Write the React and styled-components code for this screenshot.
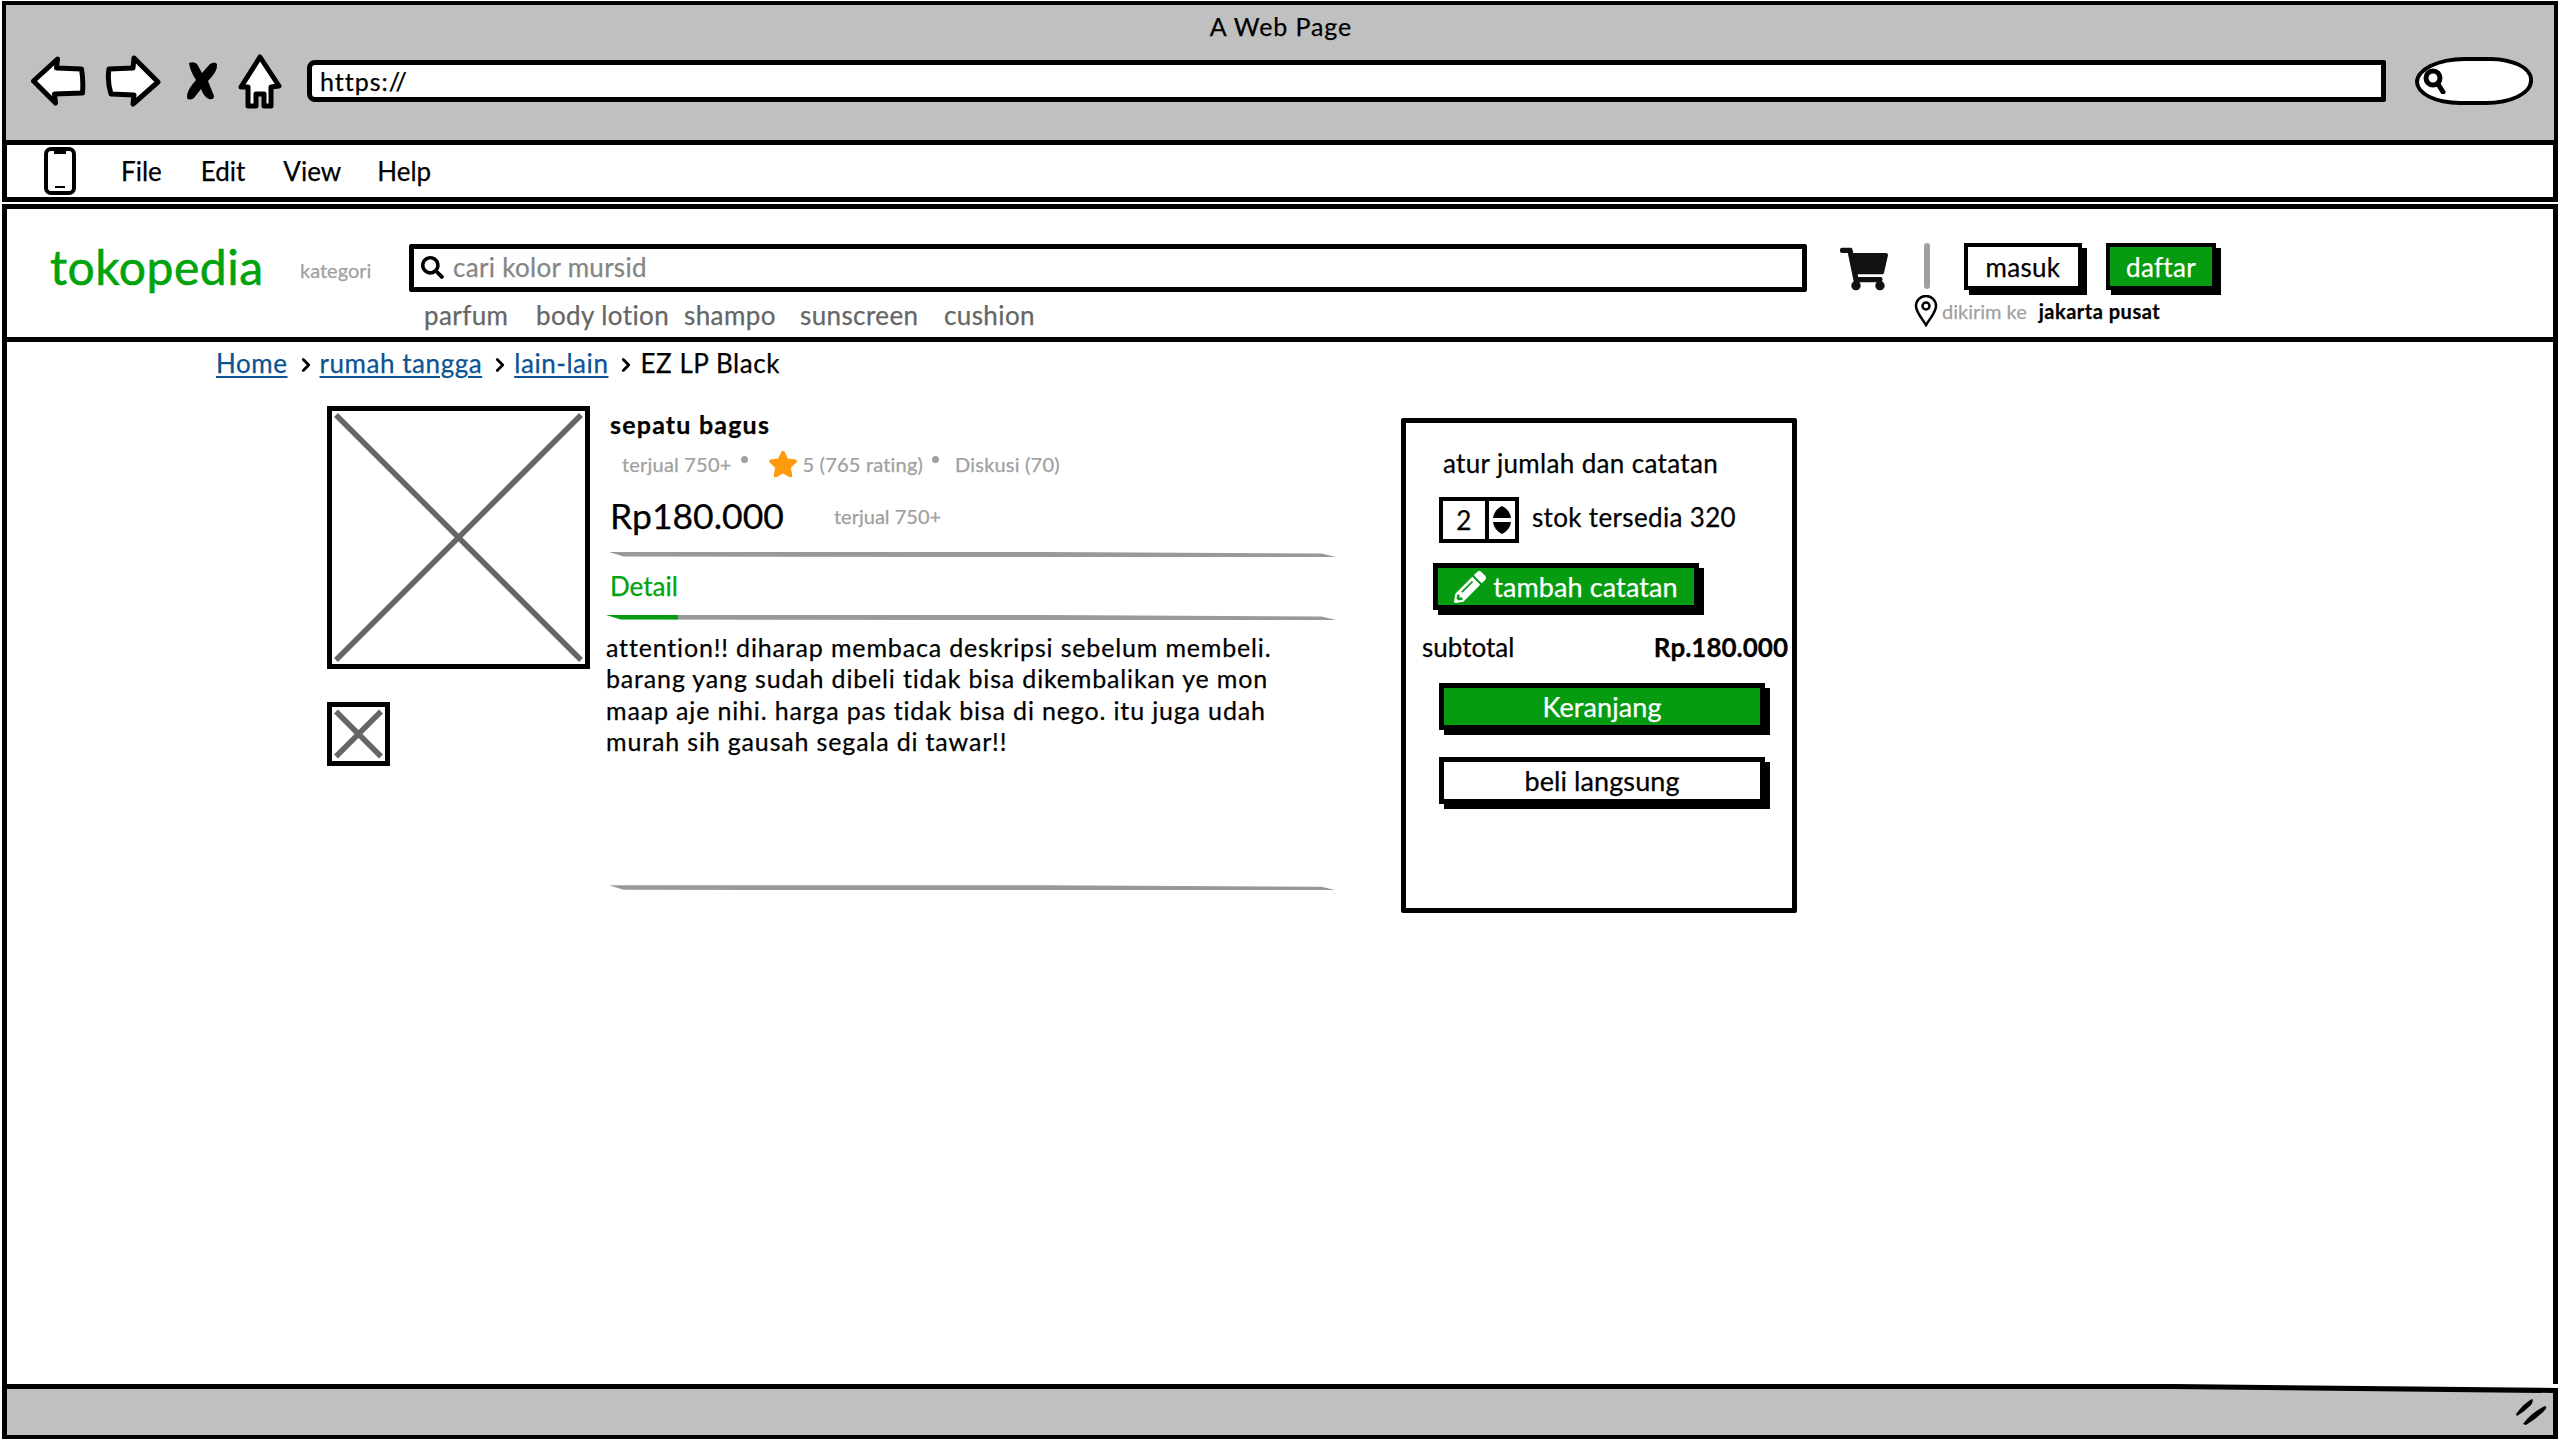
import React from "react";
import styled, { createGlobalStyle } from "styled-components";
import { FaSearch, FaShoppingCart, FaPencilAlt, FaStar } from "react-icons/fa";
import { ChevronRight } from "lucide-react";

const GlobalStyle = createGlobalStyle`
  * { box-sizing: border-box; }
  html, body { margin: 0; padding: 0; background: #fff; }
  body { font-family: Lato, "Noto Sans", sans-serif; color: #000; -webkit-text-stroke: 0.25px; }
`;

const GREEN = "#059c11";

const Frame = styled.div`
  width: 2556px;
  height: 1438px;
  margin: 1px 0 0 2px;
  display: flex;
  flex-direction: column;
`;

const TitleBar = styled.div`
  height: 139px;
  flex-shrink: 0;
  background: #c0c0c0;
  border: 4px solid #000;
  border-bottom: none;
`;
const PageTitle = styled.div`
  height: 28px;
  margin-top: 7px;
  padding-left: 2px;
  text-align: center;
  font-size: 25px;
  line-height: 28px;
  letter-spacing: 0.9px;
`;
const Toolbar = styled.div`
  height: 58px;
  margin-top: 12px;
  padding-left: 24px;
  display: flex;
  align-items: center;
`;
const NavIcon = styled.svg`
  flex-shrink: 0;
  margin-left: ${({ $gap }) => $gap || 0}px;
`;
const AddressBar = styled.div`
  width: 2079px;
  height: 42px;
  margin-left: 25px;
  padding-left: 8px;
  display: flex;
  align-items: center;
  background: #fff;
  border: 5px solid #000;
  border-radius: 8px 2px 2px 8px;
  font-size: 25px;
  letter-spacing: 1px;
`;
const SearchPill = styled.div`
  width: 118px;
  height: 48px;
  margin-left: 29px;
  padding-left: 4px;
  display: flex;
  align-items: center;
  background: #fff;
  border: 4px solid #000;
  border-radius: 42% 36% 40% 38% / 52% 46% 50% 48%;
`;

const MenuBar = styled.div`
  height: 62px;
  flex-shrink: 0;
  padding-left: 37px;
  display: flex;
  align-items: center;
  background: #fff;
  border: 5px solid #000;
  font-size: 26px;
`;
const MenuItem = styled.span`
  margin-left: ${({ $gap }) => $gap}px;
`;

const Header = styled.header`
  height: 138px;
  flex-shrink: 0;
  margin-top: 2px;
  padding: 34px 0 0 43px;
  display: flex;
  align-items: flex-start;
  background: #fff;
  border: 5px solid #000;
`;
const Logo = styled.div`
  width: 250px;
  font-size: 48px;
  line-height: 48px;
  letter-spacing: 0.5px;
  color: #00a30e;
  -webkit-text-stroke: 0.6px #00a30e;
`;
const Category = styled.div`
  width: 109px;
  margin-top: 14px;
  font-size: 20px;
  line-height: 26px;
  color: #a0a0a0;
`;
const SearchColumn = styled.div`
  width: 1398px;
  margin-top: 1px;
`;
const SearchBox = styled.div`
  height: 48px;
  padding: 0 0 2px 7px;
  display: flex;
  align-items: center;
  gap: 9px;
  border: 5px solid #000;
  border-radius: 2px;
  font-size: 26px;
  letter-spacing: 0.3px;
  color: #858585;
`;
const Tags = styled.div`
  margin-top: 10px;
  padding-left: 15px;
  display: flex;
  font-size: 26px;
  line-height: 26px;
  letter-spacing: 0.4px;
  color: #666;
`;
const Tag = styled.span`
  width: ${({ $w }) => $w}px;
`;
const CartWrap = styled.div`
  margin: 2px 0 0 33px;
  height: 44px;
  color: #111;
`;
const Account = styled.div`
  margin-left: 26px;
`;
const AccountRow = styled.div`
  display: flex;
  align-items: flex-start;
`;
const Divider = styled.div`
  width: 6px;
  height: 46px;
  margin: 0 34px 0 10px;
  border-radius: 3px;
  background: #a0a0a0;
`;
const AuthButton = styled.div`
  width: ${({ $w }) => $w}px;
  height: 47px;
  margin-right: 24px;
  display: flex;
  align-items: center;
  justify-content: center;
  font-size: 26px;
  letter-spacing: 0.3px;
  background: ${({ $green }) => ($green ? GREEN : "#fff")};
  color: ${({ $green }) => ($green ? "#fff" : "#000")};
  border: 4px solid #000;
  box-shadow: 5px 5px 0 #000;
`;
const Deliver = styled.div`
  margin-top: 5px;
  display: flex;
  align-items: center;
  font-size: 20px;
  line-height: 30px;
`;
const DeliverLabel = styled.span`
  margin-left: 4px;
  color: #a0a0a0;
`;
const DeliverCity = styled.span`
  margin-left: 12px;
  font-weight: 700;
  letter-spacing: 0.5px;
`;

const Content = styled.main`
  flex: 1;
  background: #fff;
  border-left: 5px solid #000;
  border-right: 5px solid #000;
`;
const Breadcrumb = styled.nav`
  height: 30px;
  margin-top: 6px;
  padding-left: 209px;
  display: flex;
  align-items: center;
  font-size: 26px;
  letter-spacing: 0.55px;
`;
const Crumb = styled.a`
  color: #0b5394;
  text-decoration: underline;
  text-underline-offset: 3px;
`;
const Chevron = styled(ChevronRight)`
  margin: 3px 3px 0 7px;
`;
const Product = styled.section`
  margin-top: 28px;
  padding-left: 320px;
  display: flex;
  align-items: flex-start;
`;
const Gallery = styled.div`
  width: 263px;
  flex-shrink: 0;
`;
const Placeholder = styled.div`
  width: ${({ $w }) => $w}px;
  height: ${({ $h }) => $h}px;
  margin-bottom: 33px;
  border: 5px solid #000;
  background: #fff;
`;
const CrossLines = styled.svg`
  display: block;
  width: 100%;
  height: 100%;
`;

const Info = styled.div`
  width: 730px;
  margin-left: 16px;
  flex-shrink: 0;
`;
const ProductName = styled.div`
  margin: 4px 0 0 4px;
  font-size: 25px;
  line-height: 28px;
  letter-spacing: 1.2px;
  font-weight: 700;
`;
const Meta = styled.div`
  height: 30px;
  margin: 11px 0 0 16px;
  display: flex;
  align-items: center;
  font-size: 20px;
  letter-spacing: 0.2px;
  color: #a0a0a0;
`;
const MetaDot = styled.i`
  width: 7px;
  height: 7px;
  margin: 0 ${({ $right }) => $right}px 10px 9px;
  border-radius: 50%;
  background: #a0a0a0;
`;
const Star = styled(FaStar)`
  margin-right: 5px;
  color: #ff9a0d;
`;
const PriceRow = styled.div`
  height: 44px;
  margin: 14px 0 0 4px;
  display: flex;
  align-items: center;
`;
const Price = styled.span`
  width: 224px;
  font-size: 35.5px;
`;
const PriceNote = styled.span`
  margin-top: 2px;
  font-size: 20px;
  color: #a0a0a0;
`;
const Rule = styled.div`
  height: 5px;
  margin: ${({ $top }) => $top}px 0 0 ${({ $left }) => $left ?? 3}px;
  background: linear-gradient(90deg, ${({ $accent }) => ($accent ? `${GREEN} 72px, #999 72px` : "#999 0, #999 100%")});
  clip-path: polygon(0 0, 60% 0, 98% 30%, 100% 100%, 50% 100%, 2% 90%);
`;
const DetailTab = styled.div`
  height: 30px;
  margin: 14px 0 0 4px;
  font-size: 26px;
  line-height: 30px;
  color: #00a30e;
`;
const Description = styled.p`
  margin: 12px 0 0 0;
  font-size: 25px;
  line-height: 31.3px;
  letter-spacing: 0.84px;
  white-space: pre-line;
`;

const Panel = styled.aside`
  width: 396px;
  height: 495px;
  margin: 12px 0 0 65px;
  flex-shrink: 0;
  border: 5px solid #000;
  border-radius: 2px;
  background: #fff;
`;
const PanelHeading = styled.div`
  margin: 25px 0 0 37px;
  font-size: 26px;
  line-height: 30px;
  letter-spacing: 0.35px;
`;
const StockRow = styled.div`
  margin: 19px 0 0 33px;
  display: flex;
  align-items: center;
  gap: 13px;
  font-size: 26px;
  letter-spacing: 0.35px;
`;
const Stepper = styled.div`
  width: 80px;
  height: 46px;
  display: flex;
  border: 4px solid #000;
`;
const StepValue = styled.div`
  width: 46px;
  display: flex;
  align-items: center;
  justify-content: center;
  border-right: 4px solid #000;
`;
const StepArrows = styled.div`
  flex: 1;
  display: flex;
  align-items: center;
  justify-content: center;
`;
const StockText = styled.span`
  margin-top: -6px;
`;
const ActionButton = styled.div`
  width: ${({ $w }) => $w}px;
  height: 47px;
  margin: ${({ $top }) => $top}px 0 0 ${({ $left }) => $left}px;
  display: flex;
  align-items: center;
  justify-content: center;
  gap: 7px;
  font-size: 27px;
  letter-spacing: 0.1px;
  background: ${({ $green }) => ($green ? GREEN : "#fff")};
  color: ${({ $green }) => ($green ? "#fff" : "#000")};
  border: 5px solid #000;
  box-shadow: 5px 5px 0 #000;
`;
const SubtotalRow = styled.div`
  margin: 22px 4px 0 16px;
  display: flex;
  justify-content: space-between;
  font-size: 26px;
  line-height: 30px;
`;
const SubtotalValue = styled.strong`
  font-weight: 700;
`;

const StatusBar = styled.footer`
  height: 55px;
  flex-shrink: 0;
  background: #000;
  clip-path: polygon(0 0, 85% 0, 100% 4px, 100% 100%, 0 100%);
`;
const StatusInner = styled.div`
  height: 100%;
  padding: 5px 5px 4px 5px;
`;
const StatusFill = styled.div`
  height: 100%;
  padding-right: 5px;
  display: flex;
  align-items: center;
  justify-content: flex-end;
  background: #c0c0c0;
  clip-path: polygon(0 0, 85% 0, 100% 4px, 100% 100%, 0 100%);
`;

const crumbs = ["rumah tangga", "lain-lain"];
const tags = [["parfum", 112], ["body lotion", 148], ["shampo", 116], ["sunscreen", 144], ["cushion", 100]];
const description = `attention!! diharap membaca deskripsi sebelum membeli.
barang yang sudah dibeli tidak bisa dikembalikan ye mon
maap aje nihi. harga pas tidak bisa di nego. itu juga udah
murah sih gausah segala di tawar!!`;

function Cross({ size }) {
  const a = 4;
  const b = size - 4;
  return (
    <CrossLines viewBox={`0 0 ${size} ${size}`}>
      <path d={`M${a} ${a}L${b} ${b}M${b} ${a}L${a} ${b}`} stroke="#666" strokeWidth="5.5" fill="none" />
    </CrossLines>
  );
}

export default function App() {
  return (
    <>
      <GlobalStyle />
      <Frame>
        <TitleBar>
          <PageTitle>A Web Page</PageTitle>
          <Toolbar>
            <NavIcon width="56" height="50" viewBox="0 0 55 50">
              <path d="M27 3L3 25L25 47L24 38L52 37Q53 24 51 13L26 12Z" fill="#fff" stroke="#000" strokeWidth="5" strokeLinejoin="round" />
            </NavIcon>
            <NavIcon $gap={18} width="58" height="52" viewBox="0 0 56 52">
              <path d="M29 3L53 27L28 49L29 40L6 39Q2 26 4 14L28 13Z" fill="#fff" stroke="#000" strokeWidth="5" strokeLinejoin="round" />
            </NavIcon>
            <NavIcon $gap={24} width="32" height="40" viewBox="0 0 32 40">
              <path d="M3 2Q8 0 11 3L16 12L24 3Q29 0 31 3Q32 10 22 20L28 35Q28 39 23 38Q18 36 15 28L8 37Q3 40 1 37Q0 30 10 19Q4 10 3 2Z" fill="#000" />
            </NavIcon>
            <NavIcon $gap={20} width="44" height="55" viewBox="0 0 44 55">
              <path d="M22 3L41 32L33 33L33 52L26 52L26 40L18 40L18 52L10 52L10 33L3 33Z" fill="#fff" stroke="#000" strokeWidth="5" strokeLinejoin="round" />
            </NavIcon>
            <AddressBar>https://</AddressBar>
            <SearchPill>
              <svg width="24" height="26" viewBox="0 0 24 26">
                <circle cx="10" cy="10" r="7" fill="none" stroke="#000" strokeWidth="5" />
                <path d="M15 16L20 24" stroke="#000" strokeWidth="5" strokeLinecap="round" />
              </svg>
            </SearchPill>
          </Toolbar>
        </TitleBar>

        <MenuBar>
          <svg width="32" height="48" viewBox="0 0 32 48">
            <rect x="2" y="2" width="28" height="44" rx="5" fill="#fff" stroke="#000" strokeWidth="4" />
            <path d="M10 3H22V7H10ZM11 39H21V41H11Z" fill="#000" />
          </svg>
          <MenuItem $gap={45}>File</MenuItem>
          <MenuItem $gap={39}>Edit</MenuItem>
          <MenuItem $gap={38}>View</MenuItem>
          <MenuItem $gap={36}>Help</MenuItem>
        </MenuBar>

        <Header>
          <Logo>tokopedia</Logo>
          <Category>kategori</Category>
          <SearchColumn>
            <SearchBox>
              <FaSearch size={23} color="#000" />
              cari kolor mursid
            </SearchBox>
            <Tags>
              {tags.map(([name, w]) => (
                <Tag key={name} $w={w}>{name}</Tag>
              ))}
            </Tags>
          </SearchColumn>
          <CartWrap>
            <FaShoppingCart size={48} />
          </CartWrap>
          <Account>
            <AccountRow>
              <Divider />
              <AuthButton $w={118}>masuk</AuthButton>
              <AuthButton $w={110} $green>daftar</AuthButton>
            </AccountRow>
            <Deliver>
              <svg width="24" height="32" viewBox="0 0 24 32">
                <path d="M12 30C7 22 2 17 2 11A10 10 0 0 1 22 11C22 17 17 22 12 30Z" fill="#fff" stroke="#000" strokeWidth="2.5" />
                <circle cx="12" cy="11" r="3.5" fill="none" stroke="#000" strokeWidth="2.5" />
              </svg>
              <DeliverLabel>dikirim ke</DeliverLabel>
              <DeliverCity>jakarta pusat</DeliverCity>
            </Deliver>
          </Account>
        </Header>

        <Content>
          <Breadcrumb>
            <Crumb>Home</Crumb>
            <Chevron size={22} strokeWidth={3} />
            {crumbs.map((c) => (
              <React.Fragment key={c}>
                <Crumb>{c}</Crumb>
                <Chevron size={22} strokeWidth={3} />
              </React.Fragment>
            ))}
            <span>EZ LP Black</span>
          </Breadcrumb>

          <Product>
            <Gallery>
              <Placeholder $w={263} $h={263}><Cross size={253} /></Placeholder>
              <Placeholder $w={63} $h={64}><Cross size={53} /></Placeholder>
            </Gallery>

            <Info>
              <ProductName>sepatu bagus</ProductName>
              <Meta>
                terjual 750+
                <MetaDot $right={20} />
                <Star size={30} />
                5 (765 rating)
                <MetaDot $right={16} />
                Diskusi (70)
              </Meta>
              <PriceRow>
                <Price>Rp180.000</Price>
                <PriceNote>terjual 750+</PriceNote>
              </PriceRow>
              <Rule $top={15} />
              <DetailTab>Detail</DetailTab>
              <Rule $top={14} $left={0} $accent />
              <Description>{description}</Description>
              <Rule $top={128} />
            </Info>

            <Panel>
              <PanelHeading>atur jumlah dan catatan</PanelHeading>
              <StockRow>
                <Stepper>
                  <StepValue>2</StepValue>
                  <StepArrows>
                    <svg width="20" height="30" viewBox="0 0 20 30">
                      <path d="M10 1Q18 5 19 13L1 13Q2 5 10 1ZM1 17L19 17Q18 25 10 29Q2 25 1 17Z" fill="#000" />
                    </svg>
                  </StepArrows>
                </Stepper>
                <StockText>stok tersedia 320</StockText>
              </StockRow>
              <ActionButton $w={266} $top={20} $left={27} $green>
                <FaPencilAlt size={32} />
                tambah catatan
              </ActionButton>
              <SubtotalRow>
                <span>subtotal</span>
                <SubtotalValue>Rp.180.000</SubtotalValue>
              </SubtotalRow>
              <ActionButton $w={326} $top={21} $left={33} $green>Keranjang</ActionButton>
              <ActionButton $w={326} $top={27} $left={33}>beli langsung</ActionButton>
            </Panel>
          </Product>
        </Content>

        <StatusBar>
          <StatusInner>
            <StatusFill>
              <svg width="34" height="28" viewBox="0 0 34 28">
                <path d="M2 16Q10 5 18 1Q20 2 17 7Q10 14 3 18Z M9 26Q17 15 31 8Q34 9 30 13Q22 21 12 27Z" fill="#000" />
              </svg>
            </StatusFill>
          </StatusInner>
        </StatusBar>
      </Frame>
    </>
  );
}
